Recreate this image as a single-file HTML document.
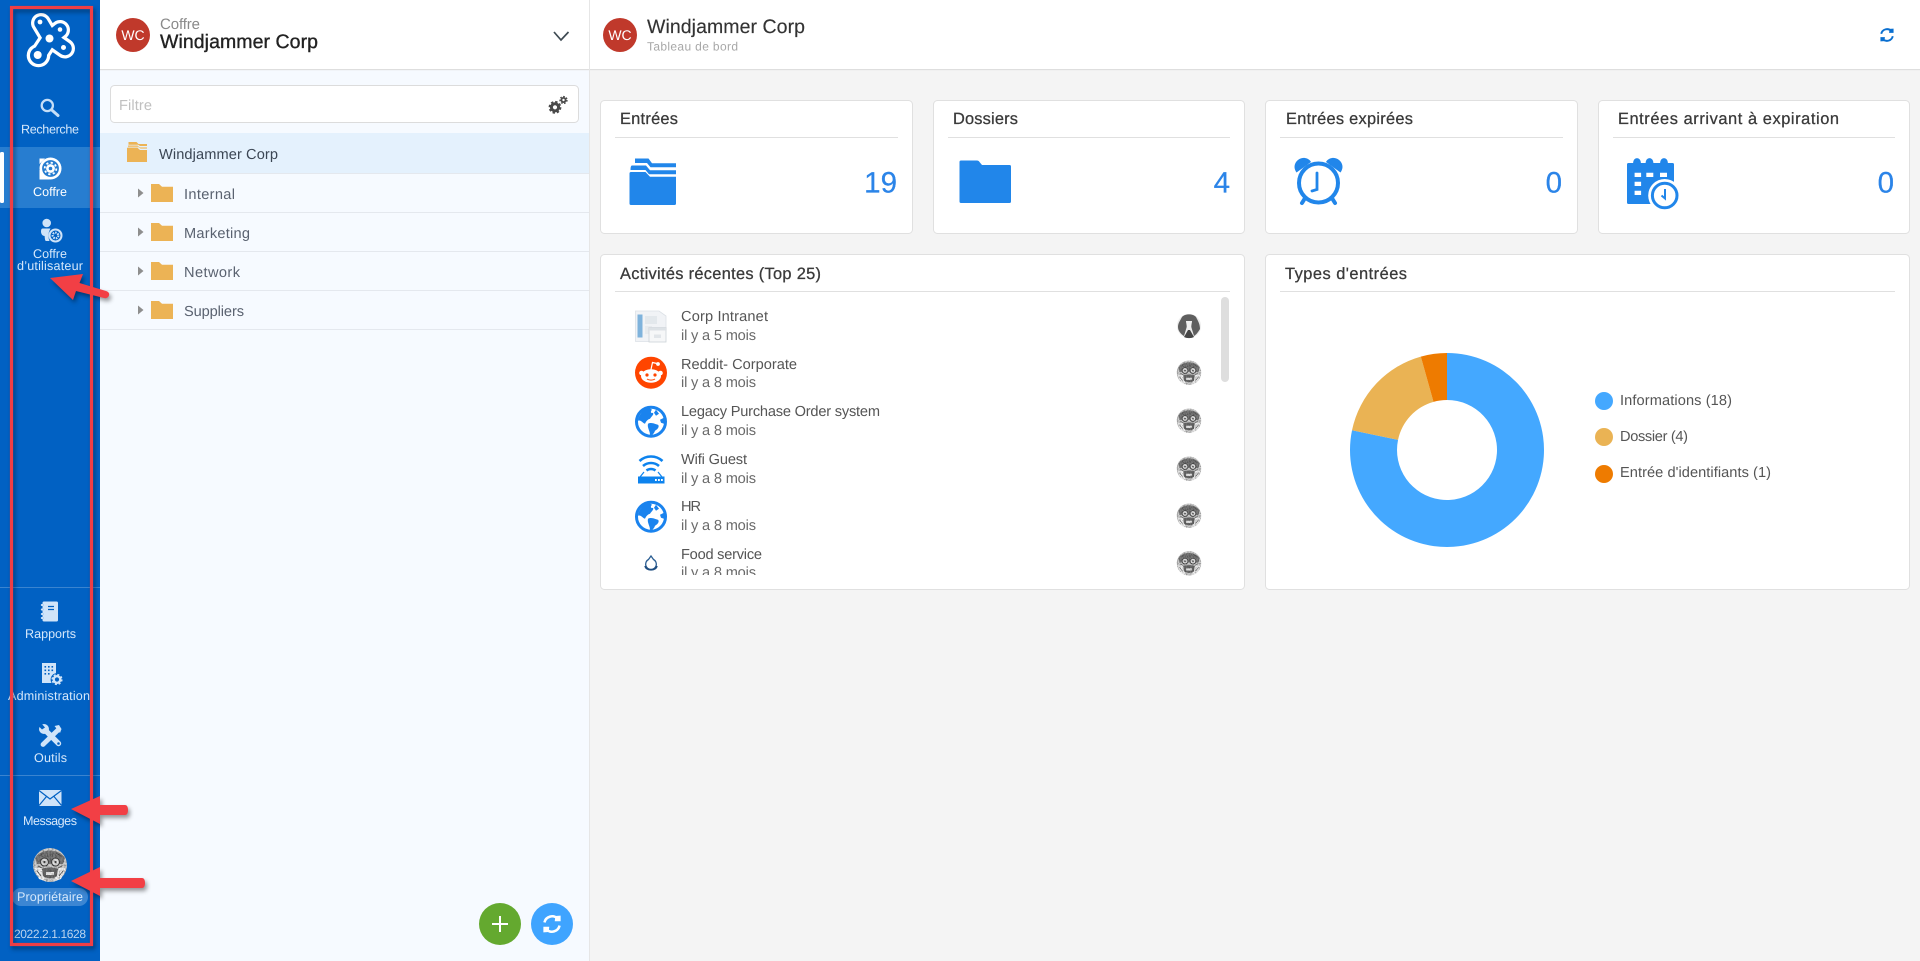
<!DOCTYPE html>
<html lang="fr">
<head>
<meta charset="utf-8">
<title>Windjammer Corp - Tableau de bord</title>
<style>
html,body{margin:0;padding:0;width:1920px;height:961px;overflow:hidden;background:#f4f4f4}
svg{display:block;position:absolute;left:0;top:0}
text{font-family:"Liberation Sans",Arial,sans-serif;text-rendering:geometricPrecision}
.nav{font-size:12.6px;fill:#d6e8fb;text-anchor:start}
.nw{fill:#fff}
.ct{font-size:16.4px;fill:#3a3a3a;stroke:#3a3a3a;stroke-width:.28}
.num{font-size:29.5px;fill:#2b84e8;stroke:#2b84e8;stroke-width:.25;text-anchor:end}
.tree{font-size:14.6px;fill:#5a6270}
.rt{font-size:14.6px;fill:#555}
.rs{font-size:14.6px;fill:#6a6a6a}
.lg{font-size:14.6px;fill:#555}
.card{fill:#fff;stroke:#e0e0e0;stroke-width:1}
.div{stroke:#e0e0e0;stroke-width:1}
.rowl{stroke:#e4e8ee;stroke-width:1}
</style>
</head>
<body>
<svg width="1920" height="961" viewBox="0 0 1920 961" xmlns="http://www.w3.org/2000/svg">
<defs>
  <g id="sync">
    <path d="M-7.2-1.5A7.4 7.4 0 0 1 5.4-5" fill="none" stroke="currentColor" stroke-width="2.4"/>
    <path d="M3.2-7.6 8.2-8V-2.6H2.6Z" fill="currentColor"/>
    <path d="M7.2 1.5A7.4 7.4 0 0 1-5.4 5" fill="none" stroke="currentColor" stroke-width="2.4"/>
    <path d="M-3.2 7.6-8.2 8V2.6H-2.6Z" fill="currentColor"/>
  </g>
  <filter id="grain" x="0" y="0" width="100%" height="100%">
    <feTurbulence type="fractalNoise" baseFrequency=".55" numOctaves="2" seed="7"/>
    <feColorMatrix values="0 0 0 0 0  0 0 0 0 0  0 0 0 0 0  2.4 2.4 0 0 -2.1"/>
    <feComposite in2="SourceAlpha" operator="in"/>
  </filter>
  <g id="monkey">
    <circle r="17" fill="#cfcfcf"/>
    <path d="M-15-7C-9-17 9-17 15-7L13-1-13-1Z" fill="#7c7c7c"/>
    <path d="M-16 3-11 14-4 16.500-8 3ZM16 3 11 14 4 16.500 8 3Z" fill="#f2f2f2"/>
    <circle cx="-5.500" cy="-3" r="4" fill="#e2e2e2" stroke="#444" stroke-width="1.100"/>
    <circle cx="5.500" cy="-3" r="4" fill="#e2e2e2" stroke="#444" stroke-width="1.100"/>
    <circle cx="-5.500" cy="-3" r="1.100" fill="#444"/>
    <circle cx="5.500" cy="-3" r="1.100" fill="#444"/>
    <path d="M-8 4C-5 2 5 2 8 4L7 11C3 14-3 14-7 11Z" fill="#6c6c6c"/>
    <path d="M-4 7H4V10H-4Z" fill="#ececec"/>
    <path d="M-13 6-9 11M13 6 9 11M-11-9-6-12M11-9 6-12M-3-12-2-8M3-12 2-8M-12 1-8 3M12 1 8 3" stroke="#555" stroke-width=".8" fill="none"/>
    <circle r="17" fill="#000" filter="url(#grain)" opacity=".28"/>
  </g>
  <g id="globe">
    <circle r="14.500" fill="#fff" stroke="#1a83ee" stroke-width="3"/>
    <path d="M-6-13C-10-9-13-5-13-1-10-2-9 1-6 2-5 0-4-2-1-3 1-6 3-7 2-9 0-8-1-10 1-12-2-14-4-14-6-13Z" fill="#1a83ee"/>
    <path d="M5-12 8-8 5-6 3-9Z" fill="#1a83ee"/>
    <path d="M-3 2C1 0 5 3 7 3 9 5 6 8 4 9 3 12 1 14-1 13-1 9-4 6-3 2Z" fill="#1a83ee"/>
    <path d="M9-2 13-4 13 2 10 1Z" fill="#1a83ee"/>
  </g>
</defs>

<!-- sidebar -->
<rect x="0" y="0" width="100" height="961" fill="#0161c3"/>
<rect x="0" y="147" width="100" height="61" fill="#277dd0"/>
<rect x="0" y="152" width="4" height="51" rx="1.500" fill="#fff"/>
<line x1="0" y1="587.500" x2="100" y2="587.500" stroke="#3a84d0"/>
<line x1="0" y1="775.500" x2="100" y2="775.500" stroke="#3a84d0"/>

<!-- logo -->
<g fill="none" stroke-linecap="round">
  <g stroke="#fff" stroke-width="20">
    <path d="M41 23 50 38M60 30 50 38M65 48.500 50 38M38.500 55.500 50 38"/>
  </g>
  <g fill="#fff">
    <circle cx="41" cy="22.500" r="8.500"/><circle cx="60.500" cy="30" r="8"/><circle cx="65" cy="48.500" r="8.600"/><circle cx="38.500" cy="55.500" r="11.800"/>
  </g>
  <g stroke="#0161c3" stroke-width="13.500">
    <path d="M41 23 50 38M60 30 50 38M65 48.500 50 38M38.500 55.500 50 38"/>
  </g>
  <g fill="#0161c3">
    <circle cx="41" cy="22.500" r="5.200"/><circle cx="60.500" cy="30" r="4.800"/><circle cx="65" cy="48.500" r="5.400"/><circle cx="38.500" cy="55.500" r="8.500"/>
  </g>
  <g fill="#fff">
    <circle cx="40" cy="22" r="2.400"/><circle cx="60" cy="29.500" r="2.300"/><circle cx="63.500" cy="47.500" r="2.500"/><circle cx="37.700" cy="55" r="4"/><circle cx="49.500" cy="38.500" r="4"/>
  </g>
</g>

<!-- search -->
<circle cx="47.300" cy="105.500" r="5.600" fill="none" stroke="#c6def7" stroke-width="2.300"/>
<path d="M51.800 110 58 115.500" stroke="#c6def7" stroke-width="3" stroke-linecap="round"/>
<text x="21" y="133.500" class="nav" textLength="58">Recherche</text>

<!-- vault -->
<circle cx="50.500" cy="168.500" r="11" fill="#fff"/>
<rect x="39.500" y="170" width="10" height="9.500" fill="#fff"/>
<path d="M39.500 158.500 45 158.500 39.500 164Z" fill="#fff"/>
<circle cx="50.500" cy="168.500" r="8.400" fill="#277dd0"/>
<circle cx="50.500" cy="168.500" r="4.400" fill="#fff"/>
<circle cx="50.500" cy="168.500" r="5.800" fill="none" stroke="#fff" stroke-width="1.800" stroke-dasharray="2.200 2.350"/>
<circle cx="50.500" cy="168.500" r="1.800" fill="#277dd0"/>
<text x="33" y="196" class="nav nw" textLength="34">Coffre</text>

<!-- user vault -->
<circle cx="46.700" cy="223" r="4.300" fill="#cfe3f8"/>
<path d="M42.500 228.500H50.500C48.500 232 47.500 236 49.500 241H46C45 241 44.800 238 44.600 236 42.500 236 41 234 41 231.500 41 229.500 41.500 228.500 42.500 228.500Z" fill="#cfe3f8"/>
<circle cx="55.500" cy="235.500" r="6" fill="none" stroke="#cfe3f8" stroke-width="2"/>
<circle cx="55.500" cy="235.500" r="2.800" fill="none" stroke="#cfe3f8" stroke-width="2.200" stroke-dasharray="1.500 1"/>
<text x="33" y="258" class="nav" textLength="34">Coffre</text>
<text x="17" y="270" class="nav" textLength="66">d’utilisateur</text>

<!-- rapports -->
<rect x="42.500" y="601.500" width="15.500" height="20" rx="1.500" fill="#d0e4f9"/>
<path d="M42 605h1.800M42 609.500h1.800M42 614h1.800M42 618h1.800" stroke="#0161c3" stroke-width="1.300"/>
<path d="M41.800 605h1M41.800 609.500h1M41.800 614h1M41.800 618h1" stroke="#d0e4f9" stroke-width="2" stroke-linecap="round"/>
<path d="M48 606.500h6M48 609.500h6" stroke="#0161c3" stroke-width="1.300"/>
<text x="25" y="638" class="nav" textLength="51">Rapports</text>

<!-- admin -->
<path d="M42 663H56V676H52V683H42Z" fill="#d0e4f9"/>
<path d="M44.500 666h1.600v1.600h-1.600zM48 666h1.600v1.600h-1.600zM51.500 666h1.600v1.600h-1.600zM44.500 669.500h1.600v1.600h-1.600zM48 669.500h1.600v1.600h-1.600zM51.500 669.500h1.600v1.600h-1.600zM44.500 673h1.600v1.600h-1.600zM48 673h1.600v1.600h-1.600z" fill="#0161c3"/>
<circle cx="57" cy="679.500" r="6.400" fill="#0161c3"/>
<circle cx="57" cy="679.500" r="3.300" fill="none" stroke="#d0e4f9" stroke-width="2.400"/>
<circle cx="57" cy="679.500" r="4.800" fill="none" stroke="#d0e4f9" stroke-width="1.600" stroke-dasharray="2 1.800"/>
<text x="8" y="700" class="nav" textLength="82">Administration</text>

<!-- tools -->
<path d="M43 744.500 58 730" stroke="#d0e4f9" stroke-width="4.800" stroke-linecap="round"/>
<path d="M54.500 726 59 725 61.500 729 60 733Z" fill="#d0e4f9"/>
<path d="M45 730 58.500 743.500" stroke="#d0e4f9" stroke-width="5.400" stroke-linecap="round"/>
<circle cx="44" cy="729" r="5" fill="#d0e4f9"/>
<path d="M41.500 723.500 45 727.500 42 729.500 38.500 726Z" fill="#0161c3"/>
<circle cx="58.500" cy="743.500" r="1.300" fill="#0161c3"/>
<text x="34" y="762" class="nav" textLength="33">Outils</text>

<!-- mail -->
<rect x="39" y="790" width="22.500" height="16" fill="#d0e4f9"/>
<path d="M39 790.500 50 799 61.500 790.500M39 805.500 46.500 796.500M61.500 805.500 54 796.500" fill="none" stroke="#0161c3" stroke-width="1.200"/>
<text x="23" y="825" class="nav" textLength="54">Messages</text>

<!-- owner -->
<use href="#monkey" x="50" y="865"/>
<rect x="12" y="888" width="76" height="18" rx="9" fill="#3c86d3"/>
<text x="17" y="901" class="nav" textLength="66">Propriétaire</text>
<text x="14" y="938" font-size="12" fill="#bcd4ee" textLength="72">2022.2.1.1628</text>

<!-- vault panel -->
<rect x="100" y="0" width="489" height="961" fill="#f6faff"/>
<rect x="100" y="0" width="1820" height="69" fill="#fff"/>
<rect x="100" y="69" width="1820" height="1.200" fill="#dedede"/>
<rect x="589" y="0" width="1" height="961" fill="#e6e6e6"/>
<circle cx="133" cy="35" r="17" fill="#c0392b"/>
<text x="133" y="40" font-size="14" fill="#fff" text-anchor="middle">WC</text>
<text x="160" y="29" font-size="15" fill="#8a8a8a" textLength="40">Coffre</text>
<text x="160" y="48" font-size="19.500" fill="#222" stroke="#222" stroke-width=".35" textLength="158">Windjammer Corp</text>
<path d="M554 32 561 40 568.500 32" fill="none" stroke="#3e4a52" stroke-width="1.700"/>

<rect x="110.500" y="85.500" width="468" height="37" rx="4" fill="#fff" stroke="#dcdcdc"/>
<text x="119" y="110" font-size="14.600" fill="#c0c0c0" textLength="33">Filtre</text>
<circle cx="555" cy="107.300" r="3.600" fill="none" stroke="#4a4a4a" stroke-width="3"/>
<circle cx="555" cy="107.300" r="5.500" fill="none" stroke="#4a4a4a" stroke-width="1.800" stroke-dasharray="2.400 1.920"/>
<circle cx="563.500" cy="100" r="2.100" fill="none" stroke="#4a4a4a" stroke-width="1.800"/>
<circle cx="563.500" cy="100" r="3.500" fill="none" stroke="#4a4a4a" stroke-width="1.300" stroke-dasharray="1.700 1.500"/>

<rect x="100" y="133" width="489" height="40" fill="#e4f1fd"/>
<line class="rowl" x1="100" y1="173.500" x2="589" y2="173.500"/>
<line class="rowl" x1="100" y1="212.500" x2="589" y2="212.500"/>
<line class="rowl" x1="100" y1="251.500" x2="589" y2="251.500"/>
<line class="rowl" x1="100" y1="290.500" x2="589" y2="290.500"/>
<line class="rowl" x1="100" y1="329.500" x2="589" y2="329.500"/>
<!-- root folder -->
<path d="M128.500 142H136.500L138.500 144H147V146H140L138 144.700H128.500Z" fill="#ecb355"/>
<path d="M128 145.400H137.500L139.500 147.200H147V148.700H140.500L138.500 147.200H128Z" fill="#f0c47a"/>
<path d="M127 147.800H137.500L140 150H147V162H127Z" fill="#ecb355"/>
<text x="159" y="159" font-size="14.600" fill="#3b4654" textLength="119">Windjammer Corp</text>
<!-- child rows -->
<g fill="#ecb355">
  <path d="M151 184H159L162 186.700H173V202H151Z"/>
  <path d="M151 223H159L162 225.700H173V241H151Z"/>
  <path d="M151 262H159L162 264.700H173V280H151Z"/>
  <path d="M151 301H159L162 303.700H173V319H151Z"/>
</g>
<g fill="#8e8e8e">
  <path d="M138 188.500 143.500 193 138 197.500Z"/>
  <path d="M138 227.500 143.500 232 138 236.500Z"/>
  <path d="M138 266.500 143.500 271 138 275.500Z"/>
  <path d="M138 305.500 143.500 310 138 314.500Z"/>
</g>
<text x="184" y="199" class="tree" textLength="51">Internal</text>
<text x="184" y="238" class="tree" textLength="66">Marketing</text>
<text x="184" y="277" class="tree" textLength="56">Network</text>
<text x="184" y="316" class="tree" textLength="60">Suppliers</text>

<circle cx="500" cy="924" r="21" fill="#64a92f"/>
<path d="M492 924H508M500 916V932" stroke="#fff" stroke-width="2"/>
<circle cx="552" cy="924" r="21" fill="#3fa4ff"/>
<use href="#sync" transform="translate(552 924) scale(1.050)" color="#fff"/>

<!-- main header -->
<circle cx="620" cy="35" r="17" fill="#c0392b"/>
<text x="620" y="40" font-size="14" fill="#fff" text-anchor="middle">WC</text>
<text x="647" y="33" font-size="19.500" fill="#333" stroke="#333" stroke-width=".15" textLength="158">Windjammer Corp</text>
<text x="647" y="50.500" font-size="12" fill="#a8a8a8" textLength="91">Tableau de bord</text>
<use href="#sync" transform="translate(1887 35) scale(.8)" color="#0a6fd0"/>

<!-- stat cards -->
<rect class="card" x="600.500" y="100.500" width="312" height="133" rx="4"/>
<rect class="card" x="933.500" y="100.500" width="311" height="133" rx="4"/>
<rect class="card" x="1265.500" y="100.500" width="312" height="133" rx="4"/>
<rect class="card" x="1598.500" y="100.500" width="311" height="133" rx="4"/>
<line class="div" x1="615" y1="137.500" x2="898" y2="137.500"/>
<line class="div" x1="948" y1="137.500" x2="1230" y2="137.500"/>
<line class="div" x1="1280" y1="137.500" x2="1563" y2="137.500"/>
<line class="div" x1="1613" y1="137.500" x2="1895" y2="137.500"/>
<text x="620" y="124" class="ct" textLength="58">Entrées</text>
<text x="953" y="124" class="ct" textLength="65">Dossiers</text>
<text x="1286" y="124" class="ct" textLength="127">Entrées expirées</text>
<text x="1618" y="124" class="ct" textLength="221">Entrées arrivant à expiration</text>
<text x="897" y="192.500" class="num">19</text>
<text x="1230" y="192.500" class="num">4</text>
<text x="1562" y="192.500" class="num">0</text>
<text x="1894" y="192.500" class="num">0</text>

<!-- entries icon -->
<g fill="#2186ea">
  <path d="M635 158.500H648.500L652 163.300H676V167.300H650.500L647 163H635Z"/>
  <path d="M632 165.500H646L650 170.200H676V174.200H649L645.500 170H630.500C630.500 167 631 165.500 632 165.500Z"/>
  <path d="M631 172H645.500L650 176.800H676V203.500C676 204.500 675.500 205 674.500 205H631C630 205 629.500 204.500 629.500 203.500V173.500C629.500 172.500 630 172 631 172Z"/>
</g>
<!-- folder icon -->
<path d="M961 160.500H977C978 160.500 979 161 979.500 162L982 165H1009.500C1010.500 165 1011 165.500 1011 166.500V201.500C1011 202.500 1010.500 203 1009.500 203H961C960 203 959.500 202.500 959.500 201.500V162C959.500 161 960 160.500 961 160.500Z" fill="#2186ea"/>
<!-- alarm icon -->
<g fill="#2186ea">
  <path d="M1296.500 172.500C1291 165 1298 157 1305 158 1308 158.500 1310 160 1311 162Z"/>
  <path d="M1340.500 172.500C1346 165 1339 157 1332 158 1329 158.500 1327 160 1326 162Z"/>
  <circle cx="1318.500" cy="183" r="19.500" fill="none" stroke="#2186ea" stroke-width="4"/>
  <path d="M1304.500 199 1302 203M1332.500 199 1335 203" stroke="#2186ea" stroke-width="4" stroke-linecap="round"/>
  <path d="M1317 173V189.500L1312 191" fill="none" stroke="#2186ea" stroke-width="2.800" stroke-linecap="round"/>
</g>
<!-- calendar icon -->
<g>
  <rect x="1627" y="163" width="47" height="41" rx="1.500" fill="#2186ea"/>
  <path d="M1633.500 163.500C1633.500 157 1640.500 157 1640.500 163.500M1646 163.500C1646 157 1653 157 1653 163.500M1660.500 163.500C1660.500 157 1667.500 157 1667.500 163.500" fill="#2186ea" stroke="#2186ea" stroke-width="1"/>
  <path d="M1634.600 172.700h6.500v4.300h-6.500zM1646.300 172.700h7v4.300h-7zM1660 172.700h7v4.300h-7zM1634.600 181.700h6.500v4.300h-6.500zM1634.600 190.700h6.500v4.300h-6.500z" fill="#fff"/>
  <circle cx="1664.700" cy="195.500" r="16.500" fill="#fff"/>
  <circle cx="1664.700" cy="195.500" r="12.300" fill="#fff" stroke="#2186ea" stroke-width="3"/>
  <path d="M1665 189V198.500L1661.500 195.500" fill="none" stroke="#2186ea" stroke-width="2"/>
</g>

<!-- activity card -->
<rect class="card" x="600.500" y="254.500" width="644" height="335" rx="4"/>
<line class="div" x1="615" y1="291.500" x2="1230" y2="291.500"/>
<text x="620" y="279" class="ct" textLength="201">Activités récentes (Top 25)</text>
<rect x="1221" y="297" width="8" height="85" rx="4" fill="#dedede"/>

<svg x="0" y="0" width="1920" height="575" viewBox="0 0 1920 575">
  <text x="681" y="321" class="rt" textLength="87">Corp Intranet</text>
  <text x="681" y="340" class="rs" textLength="75">il y a 5 mois</text>
  <text x="681" y="369" class="rt" textLength="116">Reddit- Corporate</text>
  <text x="681" y="387" class="rs" textLength="75">il y a 8 mois</text>
  <text x="681" y="416" class="rt" textLength="199">Legacy Purchase Order system</text>
  <text x="681" y="435" class="rs" textLength="75">il y a 8 mois</text>
  <text x="681" y="464" class="rt" textLength="66">Wifi Guest</text>
  <text x="681" y="483" class="rs" textLength="75">il y a 8 mois</text>
  <text x="681" y="511" class="rt" textLength="20">HR</text>
  <text x="681" y="530" class="rs" textLength="75">il y a 8 mois</text>
  <text x="681" y="559" class="rt" textLength="81">Food service</text>
  <text x="681" y="577" class="rs" textLength="75">il y a 8 mois</text>
</svg>

<!-- row icon doc -->
<path d="M635.500 311H659L666 316V330H652V341.500H635.500Z" fill="#f1f3f6" stroke="#dce1e6" stroke-width=".8"/>
<rect x="637.500" y="314.500" width="5" height="23" fill="#7fb3dc"/>
<rect x="645" y="316" width="12" height="8" fill="#e3e8ec"/>
<rect x="645" y="326" width="7" height="8" fill="#e7ebee"/>
<rect x="649" y="327.500" width="17" height="14.500" fill="#f6f7f8" stroke="#ccd2d7" stroke-width=".8"/>
<rect x="649" y="327.500" width="17" height="3" fill="#dde2e6"/>
<rect x="654" y="334.500" width="7" height="3.500" fill="#e1e5e9"/>
<!-- reddit -->
<circle cx="651" cy="372.700" r="16" fill="#ff4500"/>
<ellipse cx="651" cy="376" rx="10" ry="6.800" fill="#fff"/>
<circle cx="641.500" cy="373" r="2.300" fill="#fff"/><circle cx="660.500" cy="373" r="2.300" fill="#fff"/>
<circle cx="647" cy="375" r="1.600" fill="#ff4500"/><circle cx="655" cy="375" r="1.600" fill="#ff4500"/>
<path d="M651 369.500 652.500 362.500 657 363.500" fill="none" stroke="#fff" stroke-width="1.200"/>
<circle cx="658" cy="364" r="1.900" fill="#fff"/>
<path d="M647 379C649 380.500 653 380.500 655 379" fill="none" stroke="#ff4500" stroke-width="1"/>
<!-- globes -->
<use href="#globe" x="651" y="421.700"/>
<use href="#globe" x="651" y="516.700"/>
<!-- wifi -->
<g fill="none" stroke="#0d83ee" stroke-width="2.600">
  <path d="M639.500 461C646 455 656 455 662.500 461"/>
  <path d="M643 466C647.500 462 654.500 462 659 466"/>
  <path d="M646.500 470.500C649 468.500 653 468.500 655.500 470.500"/>
  <path d="M644 472 640 477M658 472 662 477" stroke-width="1.200"/>
</g>
<rect x="638" y="476.500" width="26.500" height="7" fill="#0d83ee"/>
<path d="M655 479h1.800v2h-1.800zM658 479h1.800v2h-1.800zM661 479h1.800v2h-1.800z" fill="#fff"/>
<!-- food -->
<path d="M651 556 653.500 559.500A5.300 5.300 0 1 1 648.500 559.500Z" fill="none" stroke="#2a5d92" stroke-width="1.300"/>
<path d="M645 566C647 571 655 571 657 566" fill="none" stroke="#1f4d80" stroke-width="1.800"/>
<!-- avatars -->
<g transform="translate(1189 326)">
  <circle r="12" fill="#ececec"/>
  <path d="M-7-9C-4-12.500 4-12.500 7-9 9-5 11-2 11 3 9 6 8 8 5 10L2 0 3-5H-3L-2 0-5 10C-8 8-11 5-11 1-11-3-9-5-7-9Z" fill="#5f5f5f"/>
  <path d="M-3-5H3L2 2 0 4-2 2Z" fill="#f0f0f0"/>
  <path d="M-5 11-1 4 1 4 5 11C2 12.500-2 12.500-5 11Z" fill="#454545"/>
</g>
<use href="#monkey" transform="translate(1189 372.700) scale(.72)"/>
<use href="#monkey" transform="translate(1189 420.700) scale(.72)"/>
<use href="#monkey" transform="translate(1189 468.700) scale(.72)"/>
<use href="#monkey" transform="translate(1189 515.700) scale(.72)"/>
<use href="#monkey" transform="translate(1189 563.300) scale(.72)"/>
<!-- clip below list -->
<rect x="675" y="575" width="490" height="12" fill="#fff"/>

<!-- types card -->
<rect class="card" x="1265.500" y="254.500" width="644" height="335" rx="4"/>
<line class="div" x1="1280" y1="291.500" x2="1895" y2="291.500"/>
<text x="1285" y="279" class="ct" textLength="122">Types d'entrées</text>
<path d="M1447 353A97 97 0 1 1 1352.030 430.260L1398.050 439.830A50 50 0 1 0 1447 400Z" fill="#44a8ff"/>
<path d="M1352.030 430.260A97 97 0 0 1 1420.830 356.600L1433.510 401.860A50 50 0 0 0 1398.050 439.830Z" fill="#eab354"/>
<path d="M1420.830 356.600A97 97 0 0 1 1447 353V400A50 50 0 0 0 1433.510 401.860Z" fill="#ee7b00"/>
<circle cx="1604" cy="401" r="9" fill="#44a8ff"/>
<circle cx="1604" cy="437" r="9" fill="#eab354"/>
<circle cx="1604" cy="474" r="9" fill="#ee7b00"/>
<text x="1620" y="405" class="lg" textLength="112">Informations (18)</text>
<text x="1620" y="441" class="lg" textLength="68">Dossier (4)</text>
<text x="1620" y="477" class="lg" textLength="151">Entrée d'identifiants (1)</text>

<!-- red annotations -->
<g style="filter:drop-shadow(2px 3px 2px rgba(0,0,0,.4))">
  <rect x="11.500" y="7.500" width="80" height="937" fill="none" stroke="#ef3e45" stroke-width="3.200"/>
  <path d="M50 278 83 274 79.500 283 106 291C109 292 110 294 108.500 296.500 107.500 298 105.500 298.500 104 298L76 291 73 300Z" fill="#f23f45"/>
  <path d="M71 809 100 796V805H125C127 805 128 807 128 810S127 815 125 815H100V824Z" fill="#f23f45"/>
  <path d="M71 881 100 867V878H142C144 878 145 880 145 883S144 888 142 888H100V896Z" fill="#f23f45"/>
</g>
</svg>
</body>
</html>
